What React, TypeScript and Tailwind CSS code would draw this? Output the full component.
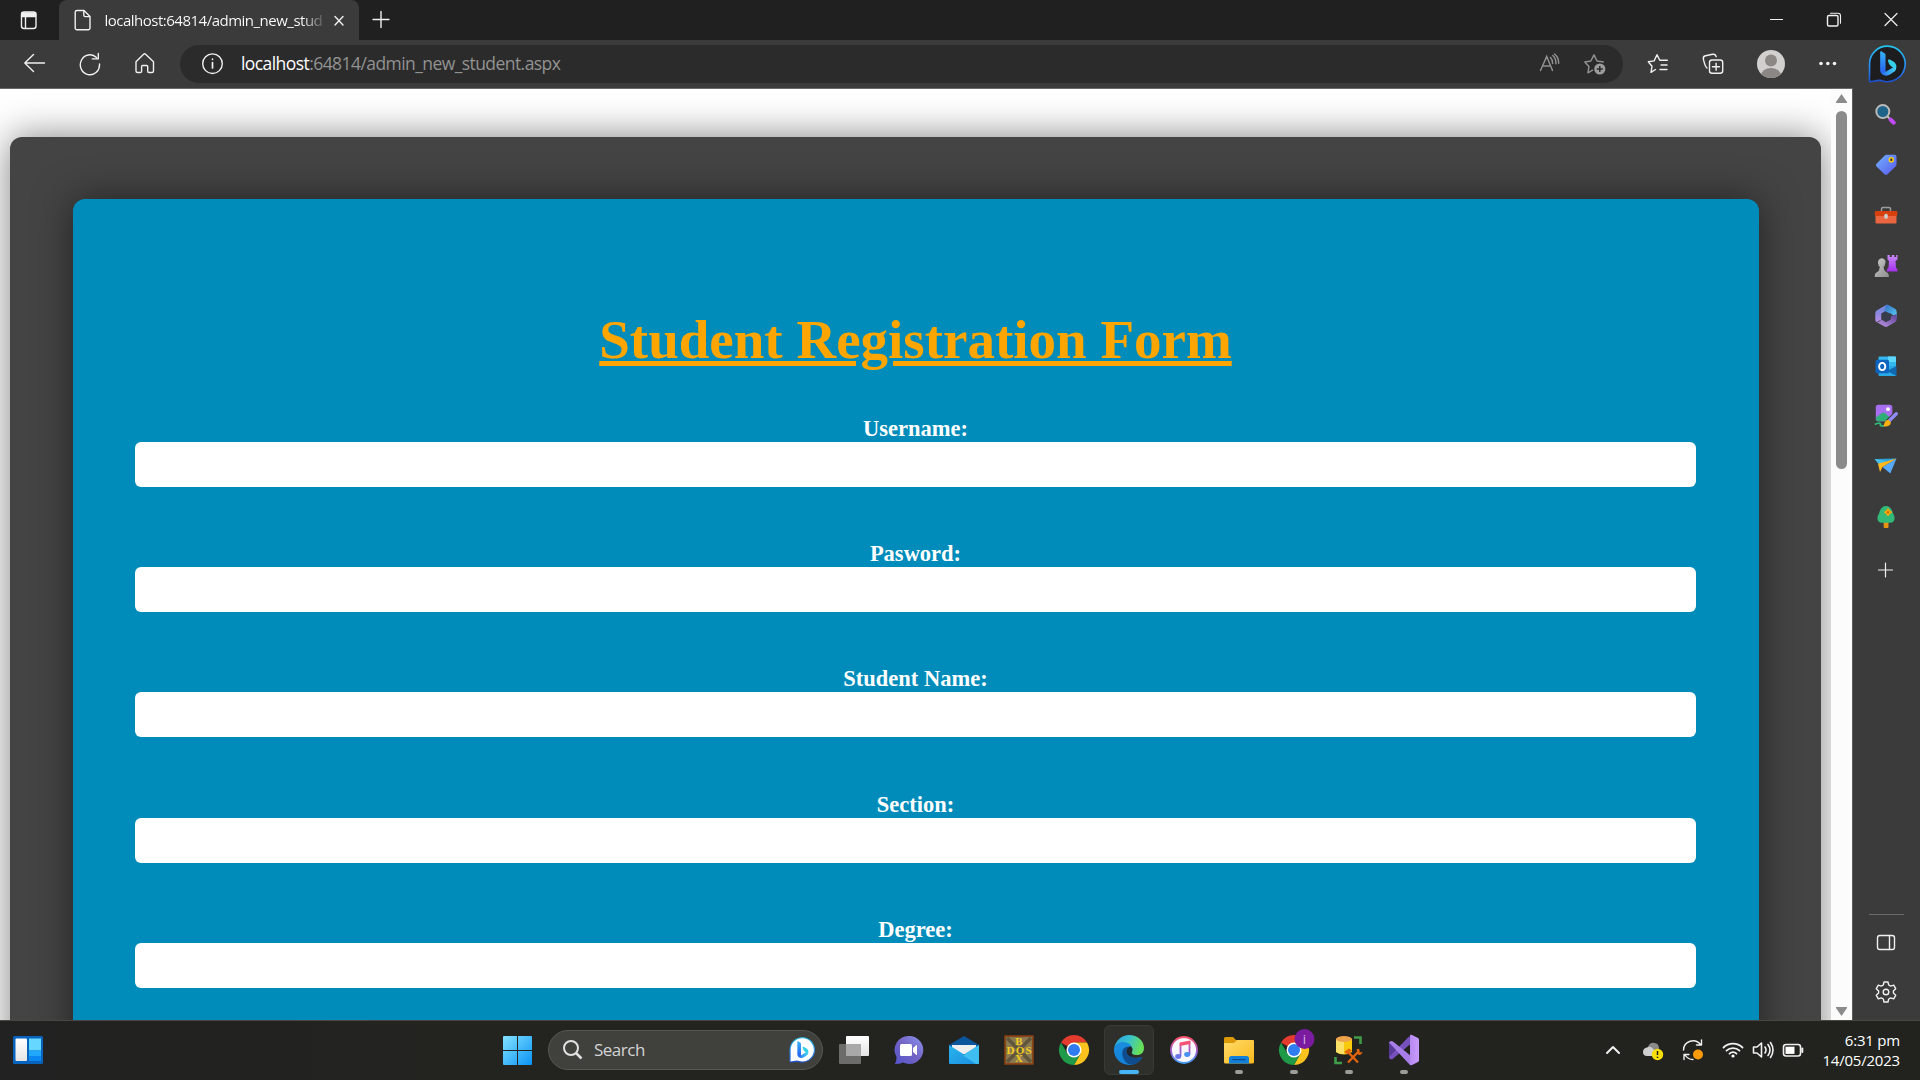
import React from "react";

type P = { children?: React.ReactNode };

const Line = ({ children, w = 24, h = 24 }: P & { w?: number; h?: number }) => (
  <svg width={w} height={h} viewBox={`0 0 ${w} ${h}`} fill="none" stroke="#f0f0f0" strokeWidth="1.4" strokeLinecap="round" strokeLinejoin="round" className="shrink-0">
    {children}
  </svg>
);

const Pic = ({ children, s = 24 }: P & { s?: number }) => (
  <svg width={s} height={s} viewBox={`0 0 ${s} ${s}`} className="shrink-0 overflow-visible">
    {children}
  </svg>
);

const Defs = () => (
  <svg width="0" height="0" className="absolute">
    <defs>
      <linearGradient id="bingRingTop" x1="0" y1="0" x2="0" y2="1">
        <stop offset="0" stopColor="#23c3ee" />
        <stop offset=".6" stopColor="#2a86ef" />
        <stop offset="1" stopColor="#1c51cf" />
      </linearGradient>
      <linearGradient id="bingStem" x1="0" y1="0" x2="0" y2="1">
        <stop offset="0" stopColor="#36b3fa" />
        <stop offset="1" stopColor="#2458ee" />
      </linearGradient>
      <linearGradient id="bingTail" x1="0" y1="0" x2="1" y2="0">
        <stop offset="0" stopColor="#2a63ee" />
        <stop offset="1" stopColor="#3fd8f2" />
      </linearGradient>
      <linearGradient id="win" x1="0" y1="0" x2="1" y2="1">
        <stop offset="0" stopColor="#83e2ff" />
        <stop offset="1" stopColor="#0a93f5" />
      </linearGradient>
      <linearGradient id="tag" x1="0" y1="0" x2="1" y2="1">
        <stop offset="0" stopColor="#71b5fa" />
        <stop offset="1" stopColor="#5a55f2" />
      </linearGradient>
      <linearGradient id="purple" x1="0" y1="0" x2="0" y2="1">
        <stop offset="0" stopColor="#c78bfa" />
        <stop offset="1" stopColor="#a42fe8" />
      </linearGradient>
      <linearGradient id="pawn" x1="0" y1="0" x2="1" y2="1">
        <stop offset="0" stopColor="#c9c9c9" />
        <stop offset="1" stopColor="#8e8e8e" />
      </linearGradient>
      <linearGradient id="officeA" x1="0" y1="0" x2="0" y2="1">
        <stop offset="0" stopColor="#6a86dc" />
        <stop offset="1" stopColor="#b48be4" />
      </linearGradient>
      <linearGradient id="officeB" x1="0" y1="0" x2="1" y2="1">
        <stop offset="0" stopColor="#3468c4" />
        <stop offset="1" stopColor="#55d0f2" />
      </linearGradient>
      <linearGradient id="officeC" x1="0" y1="1" x2="1" y2="0">
        <stop offset="0" stopColor="#c39ae8" />
        <stop offset="1" stopColor="#5a3f94" />
      </linearGradient>
      <linearGradient id="chat" x1="1" y1="0" x2="0" y2="1">
        <stop offset="0" stopColor="#8b95ee" />
        <stop offset=".5" stopColor="#7363c4" />
        <stop offset="1" stopColor="#5455cb" />
      </linearGradient>
      <linearGradient id="mail" x1="0" y1="0" x2="1" y2="1">
        <stop offset="0" stopColor="#28b4ed" />
        <stop offset="1" stopColor="#1c8ee0" />
      </linearGradient>
      <linearGradient id="edgeTop" x1="0" y1="0" x2="1" y2=".3">
        <stop offset="0" stopColor="#2a9fe0" />
        <stop offset=".5" stopColor="#37c1cf" />
        <stop offset="1" stopColor="#67df59" />
      </linearGradient>
      <linearGradient id="edgeLeft" x1="0" y1="0" x2=".3" y2="1">
        <stop offset="0" stopColor="#1c8fe0" />
        <stop offset="1" stopColor="#1280d6" />
      </linearGradient>
      <linearGradient id="folder" x1="0" y1="0" x2="1" y2="1">
        <stop offset="0" stopColor="#ffdb6a" />
        <stop offset="1" stopColor="#fbb91c" />
      </linearGradient>
      <linearGradient id="note" gradientUnits="userSpaceOnUse" x1="0" y1="2" x2="0" y2="28">
        <stop offset="0" stopColor="#f9526b" />
        <stop offset=".55" stopColor="#a05dd0" />
        <stop offset="1" stopColor="#3d9cf2" />
      </linearGradient>
      <linearGradient id="vs" x1="0" y1="0" x2="1" y2="0">
        <stop offset="0" stopColor="#b78af0" />
        <stop offset="1" stopColor="#c99bfb" />
      </linearGradient>
      <linearGradient id="paper" x1="0" y1="0" x2="0" y2="1">
        <stop offset="0" stopColor="#ffffff" />
        <stop offset="1" stopColor="#e5e5e5" />
      </linearGradient>
    </defs>
  </svg>
);

const BingMark = () => (
  <>
    <path d="M12.5 7.6C12.5 6.5 13.6 6.3 14.4 6.8L16.6 8.1C17.6 8.7 18 9.4 18 10.5V27L19 31C15 31 12.5 29 12.5 26Z" fill="url(#bingStem)" />
    <path d="M20.5 16.2C20.2 15 21.2 14.4 22.4 15L26 17C29.3 19 30 22.4 28.3 25.5L23.5 21.6C22 20.6 21 18.4 20.5 16.2Z" fill="#35cfe6" />
    <path d="M13 27C14.5 29 17 28.2 19 27L25.5 23C28.5 21.4 30 24.5 27.5 27L22.5 30.3C18.5 32.8 13.5 31 13 27Z" fill="url(#bingTail)" />
  </>
);

const BingBubble = ({ s, bg }: { s: number; bg: string }) => (
  <svg width={s} height={s} viewBox="0 0 39 39" className="shrink-0">
    <path d="M20 1.2a18.2 18.2 0 1 1-6 35.4C9.500 35.300 6 37.800 2 37.500C1 37.400 1.500 34 1.600 30V19.500A18.300 18.300 0 0 1 20 1.200Z" fill={bg} stroke="url(#bingRingTop)" strokeWidth="1.7" />
    <BingMark />
  </svg>
);

const TitleBar = () => (
  <header className="flex h-10 shrink-0 bg-[#202020]">
    <div className="flex w-[58px] items-center justify-center">
      <Line>
        <rect x="4.500" y="4" width="14.500" height="16.500" rx="2.500" />
        <path d="M5 5h13.500v3.500h-13.500z" fill="#f0f0f0" />
        <path d="M8.500 8v12" />
      </Line>
    </div>
    <div className="ml-px flex w-[300px] items-center rounded-t-lg bg-[#3b3b3b] pl-[12px]">
      <Line>
        <path d="M6 2.500h7l6 6V20a1.800 1.800 0 0 1-1.800 1.800H6A1.800 1.800 0 0 1 4.200 20V4.200A1.800 1.800 0 0 1 6 2.500Z" />
        <path d="M12.800 2.800v4.500a1.300 1.300 0 0 0 1.300 1.300h4.500" />
      </Line>
      <div className="ml-[9.500px] ml-[9.5px] w-[219.5px] whitespace-nowrap bg-gradient-to-r from-white from-90% to-[#555] bg-clip-text font-['Open_Sans',sans-serif] text-[15px] leading-5 tracking-[-0.5px] text-transparent">
        localhost:64814/admin_new_stud
      </div>
      <div className="ml-[3px] flex w-6 justify-center">
        <Line><path d="M8 8.500l8 8.500M16 8.500l-8 8.500" /></Line>
      </div>
    </div>
    <div className="ml-[9.5px] flex w-6 items-center justify-center">
      <Line><path d="M12 3.500v16M4 11.500h16" /></Line>
    </div>
    <div className="ml-auto flex">
      <div className="flex w-[57px] items-center justify-center"><Line><path d="M5.500 11.500h12" strokeLinecap="square" strokeWidth="1" /></Line></div>
      <div className="flex w-[57px] items-center justify-center">
        <Line><rect x="5.500" y="7.500" width="10.500" height="10.500" rx="1.500" /><path d="M8.500 5.300h7.500a2.500 2.500 0 0 1 2.500 2.500v7.500" strokeWidth="1.100" /></Line>
      </div>
      <div className="flex w-[58px] items-center justify-center"><Line><path d="M6 5.500l12 12M18 5.500L6 17.500" strokeWidth="1.200" /></Line></div>
    </div>
  </header>
);

const ToolBar = () => (
  <div className="flex h-12 shrink-0 items-center bg-[#3b3b3b] pl-[7.5px]">
    <div className="flex w-[55px] justify-center"><Line><path d="M21.500 11h-19.500M10.500 2.500l-8.700 8.500 8.700 8.500" /></Line></div>
    <div className="flex w-[55px] justify-center"><Line><path d="M18.500 5.500A9.600 10 0 1 0 21.500 12M20.300 1.500v5.400h-6" /></Line></div>
    <div className="flex w-[55px] justify-center">
      <Line><path d="M3 9.800L10.600 2.200a1.400 1.400 0 0 1 2 0L20.500 9.800V19a1.500 1.500 0 0 1-1.500 1.500H16A1.300 1.300 0 0 1 14.700 19.200V14.500a1 1 0 0 0-1-1H9.600a1 1 0 0 0-1 1v4.700A1.300 1.300 0 0 1 7.300 20.500h-2.800A1.500 1.500 0 0 1 3 19Z" /></Line>
    </div>
    <div className="ml-[7.5px] flex h-[38px] w-[1443px] items-center rounded-full bg-[#2b2b2b] pl-5">
      <Line><circle cx="12.500" cy="11.700" r="9.800" /><path d="M12.500 10.500v5.500M12.500 7.100v.2" strokeWidth="1.700" /></Line>
      <span className="ml-[17px] whitespace-nowrap pb-0.5 font-['Open_Sans',sans-serif] text-[17.5px] leading-6 tracking-[-0.57px] text-[#929292]">
        <span className="text-white">localhost</span>:64814/admin_new_student.aspx
      </span>
      <div className="ml-auto flex items-center gap-[22px] pr-[16px]">
        <svg width="24" height="24" viewBox="0 0 24 24" fill="none" stroke="#8f8f8f" strokeWidth="1.500" strokeLinecap="round">
          <path d="M3.500 18.500L9.700 4.500L15.500 18.500M5.500 14h8.200M13.500 5.500q2.300 2.300 2.200 6M15.800 3.500q3.400 3.200 3.200 8.200" />
          <path d="M17.500 2q4.300 3.500 4.200 9.200" />
        </svg>
        <svg width="24" height="24" viewBox="0 0 24 24" fill="none" stroke="#8f8f8f" strokeWidth="1.500" strokeLinejoin="round">
          <path d="M10 17.800l-5 3 .9-6.300L1.800 10l6-1L11 2.800L14 9l6.800 1" />
          <circle cx="16.800" cy="17" r="5.600" fill="#9c9c9c" stroke="none" />
          <path d="M16.800 14v6M13.800 17h6" stroke="#2b2b2b" />
        </svg>
      </div>
    </div>
    <div className="ml-[7.5px] flex w-[55px] justify-center">
      <Line><path d="M9.500 17.500L5 20.300l1-6L2.300 9.800l5.800-.9L11 2.700L13.800 8.300M13.800 8.300h7.500M15 13h6M14 17.500h7" /></Line>
    </div>
    <div className="flex w-[55px] justify-center">
      <Line><rect x="8.500" y="8" width="13.200" height="13.200" rx="2.500" /><path d="M15.100 11.200v7M11.500 14.700h7M6 16C4 14.500 3.500 11.500 2.400 7.200C1.900 5.200 2.500 4.200 4.500 3.700L11.500 2.300C13.500 1.900 14.700 2.700 15.200 4.700" /></Line>
    </div>
    <div className="flex w-[60px] justify-center">
      <Pic s={28}>
        <clipPath id="face"><circle cx="14" cy="14" r="14" /></clipPath>
        <circle cx="14" cy="14" r="14" fill="#d2d0ce" />
        <circle cx="14" cy="10.500" r="6" fill="#8a8784" />
        <ellipse cx="14" cy="25.500" rx="10" ry="7.500" fill="#8a8784" clipPath="url(#face)" />
      </Pic>
    </div>
    <div className="flex w-[54px] justify-center">
      <Pic><circle cx="5" cy="11.500" r="1.800" fill="#f0f0f0" /><circle cx="11.800" cy="11.500" r="1.800" fill="#f0f0f0" /><circle cx="18.500" cy="11.500" r="1.800" fill="#f0f0f0" /></Pic>
    </div>
    <div className="flex w-[65.5px] justify-center"><BingBubble s={38} bg="#1d1d1f" /></div>
  </div>
);

const sideIcons: React.ReactNode[] = [
  <Pic key="search">
    <path d="M13.500 13.500l3.500 3.500" stroke="#bdbdbd" strokeWidth="2" />
    <path d="M16.500 16.500l3.300 3.200" stroke="#c24af5" strokeWidth="4" strokeLinecap="round" />
    <circle cx="8.800" cy="8.500" r="6.500" fill="#1f6388" stroke="#b9b9b9" strokeWidth="2" />
  </Pic>,
  <Pic key="tag">
    <path d="M12.500 1.800H20.500Q22.500 1.800 22.500 3.800V11.500Q22.500 12.500 21.500 13.600L13.500 21.300Q12 22.500 10.500 21.300L2.500 13.500Q1.300 12.200 2.500 10.800L10.500 2.800Q11.500 1.800 12.500 1.800Z" fill="url(#tag)" />
    <circle cx="17.300" cy="6.800" r="2" fill="#333" stroke="#f5c918" strokeWidth="1.600" />
  </Pic>,
  <Pic key="tools">
    <path d="M7.500 8V6Q7.500 4.500 9 4.500h6Q16.500 4.500 16.500 6v2" stroke="#9d9d9d" strokeWidth="1.500" fill="none" />
    <rect x="1.500" y="12" width="21" height="8.500" rx="1.300" fill="#e96640" />
    <rect x=".8" y="8" width="22.500" height="5" rx="1" fill="#d6400f" />
    <rect x="10.300" y="10.800" width="3.500" height="5" rx="1.600" fill="#c9cfcf" />
  </Pic>,
  <Pic key="games">
    <path d="M13.500 1h2.300v2h2V1h2.400v2h2V1H23.500v4.500l-2 1.500.5 6.500 1.500 2.300v1.700H12.800v-1.700l1.700-2.300.5-6.500-1.500-1.500Z" fill="url(#purple)" />
    <path d="M4 8a3.800 3.800 0 1 1 6.800 2.500v1.500L9.500 12.500q.3 4 2 5 2.800 1 3.300 3.500v2H.8v-2Q1 18.500 4 17.500q1.500-1.300 1.800-5L4.500 12V10.500Q3.600 9.500 4 8Z" fill="url(#pawn)" />
  </Pic>,
  <Pic key="m365">
    <path d="M12.500 .8L3 6.200Q1.300 7.200 1.300 9V16Q1.300 17.300 2.500 18L7.500 15.500V9.500L14.500 5.500V2Q14 .5 12.500 .8Z" fill="url(#officeA)" />
    <path d="M12.500 .8Q13.500 .4 14.500 1L21 4.800Q22.700 5.800 22.700 8V13.500L16.500 9.500 9.500 8.500 11 5Q11.500 2 12.500 .8Z" fill="url(#officeB)" />
    <path d="M22.700 10V15.500Q22.700 17.300 21 18.300L13.500 22.600Q12 23.300 10.500 22.600L2.500 18Q5 18.500 7.500 15.500L12 18L16.500 15.500V12.500Z" fill="url(#officeC)" />
    <path d="M7.500 9.500L11.500 7.300L16.800 10v5.300L12 18l-4.500-2.700Z" fill="#373d4a" />
  </Pic>,
  <Pic key="outlook">
    <path d="M5.500 2.500H21q1 0 1 1V12H4.500V3.500q0-1 1-1Z" fill="#35b8ef" />
    <path d="M14 2.500h7q1 0 1 1V8h-8Z" fill="#5ed8fa" />
    <path d="M4.500 12H22v9q0 1-1 1H5.500q-1 0-1-1Z" fill="#28a9e8" />
    <path d="M22.500 12v10L13 17Z" fill="#1268ae" />
    <rect x="1.500" y="5.800" width="13.500" height="13.500" rx="1.500" fill="#0f64c0" />
    <ellipse cx="8.200" cy="12.500" rx="3.100" ry="3.600" stroke="#fff" strokeWidth="1.900" fill="none" />
  </Pic>,
  <Pic key="designer">
    <rect x="1.800" y=".8" width="16.500" height="16.500" rx="2.500" fill="#a86ef0" />
    <path d="M2 13.500L8 9q1.500-1 3 0l7 6.500q-.5 1.800-2.500 1.800H4Q1.800 17 2 13.500Z" fill="#2fae78" />
    <circle cx="14" cy="5.200" r="1.900" fill="#fff" />
    <path d="M.8 20.500q4-2.500 6-.5-2 3 4 1.500" stroke="#2dbb78" strokeWidth="1.600" fill="none" />
    <path d="M14.500 17.500L22 10" stroke="#3b3b3b" strokeWidth="5.500" strokeLinecap="round" />
    <path d="M15.500 16.500L22.300 9.800" stroke="#8f8cf5" strokeWidth="3.400" strokeLinecap="round" />
    <path d="M9.500 22.300q1-6.300 4.800-6.500l2.700 2.700q-1 4.500-7.500 3.800Z" fill="#fbb012" />
  </Pic>,
  <Pic key="drop">
    <path d="M.5 5L22.500 4.500L8 11Z" fill="#2aa5e0" />
    <path d="M22.500 4.500L8.500 13l7.800 6.500Z" fill="#58a9f7" />
    <path d="M.5 5L5 10.500 12 7Z" fill="#49bfe8" />
    <path d="M4 9.800L22.500 4.500 8.500 13 6 18Z" fill="#ffb81e" />
  </Pic>,
  <Pic key="tree">
    <rect x="9.700" y="15" width="4.800" height="8" rx="1" fill="#e8940e" />
    <path d="M12 1C16.500 1 18 5 19 8.500C22 13 20.500 17.800 16 17.800H8C3.500 17.800 2 13 5 8.500C6 5 7.500 1 12 1Z" fill="#32b978" />
    <path d="M14 3.500l1.500 2.200 2.300 1.500-2.300 1.500L14 11l-1.500-2.300-2.300-1.500 2.300-1.500Z" fill="#fba50c" stroke="#fba50c" strokeWidth="1" />
    <circle cx="14" cy="7.200" r="1" fill="#b55b08" />
  </Pic>,
];

const Sidebar = () => (
  <aside className="flex w-[68px] shrink-0 flex-col items-center border-l border-[#5c5c5c] bg-[#3b3b3b] pr-px pt-[2px]">
    {sideIcons.map((icon, i) => (
      <div key={i} className="flex h-[50.2px] w-full shrink-0 items-center justify-center">{icon}</div>
    ))}
    <div className="flex h-[56px] items-center"><Line><path d="M11.500 5v14M4.500 12h14" strokeWidth="1.200" /></Line></div>
    <div className="mt-auto h-px w-[35px] bg-[#6b6b6b]" />
    <div className="mt-0.5 flex h-[50px] items-center">
      <Line><rect x="3.500" y="5.500" width="17" height="14" rx="2.300" /><path d="M15.500 5.500v14" /></Line>
    </div>
    <div className="mb-[3px] flex h-[50px] items-center">
      <Line>
        <circle cx="12" cy="12" r="2.800" />
        <path d="M10 2h4l.7 3 2 1.100 3-.9 2 3.500-2.300 2.200v2.200l2.300 2.200-2 3.500-3-.9-2 1.100L14 22h-4l-.7-3-2-1.100-3 .9-2-3.500 2.300-2.200v-2.200L2.300 8.700l2-3.500 3 .9 2-1.100Z" />
      </Line>
    </div>
  </aside>
);

const fields = ["Username:", "Pasword:", "Student Name:", "Section:", "Degree:"];

const WebPage = () => (
  <main className="h-[931px] w-[1831px] shrink-0 overflow-hidden bg-white pl-2.5 pt-[48px]">
    <div className="h-[1200px] w-[1811px] rounded-xl bg-[#444444] pl-[63px] pt-[62px] shadow-[0_0_38px_rgba(0,0,0,0.5)]">
      <form className="h-[1200px] w-[1686px] rounded-xl bg-[#008cba] pl-[62px] pr-[63px] pt-[109px] font-['Liberation_Serif',serif] font-bold shadow-[0_0_38px_rgba(0,0,0,0.5)]">
        <h1 className="h-[106px] text-center text-[55px] leading-[63px] text-[#ffa500] underline">Student Registration Form</h1>
        {fields.map((label) => (
          <div key={label} className="h-[125.2px]">
            <label className="block h-[28px] text-center text-[22.5px] leading-[30px] text-white">{label}</label>
            <input className="block h-[45px] w-full rounded-md bg-white outline-none" />
          </div>
        ))}
      </form>
    </div>
  </main>
);

const ScrollBar = () => (
  <div className="flex w-[21px] shrink-0 flex-col items-center bg-[#fcfcfc] pt-[5px]">
    <svg width="11" height="9" viewBox="0 0 11 9"><path d="M5.500 0L11 8V9H0V8Z" fill="#8b8b8b" /></svg>
    <div className="mt-2 h-[358px] w-[11px] rounded-full bg-[#8b8b8b]" />
    <svg width="11" height="9" viewBox="0 0 11 9" className="mb-1 mt-auto"><path d="M5.500 9L11 1V0H0V1Z" fill="#8b8b8b" /></svg>
  </div>
);

const ChromeLogo = () => (
  <>
    <path d="M15 15L2 7.500A15 15 0 0 1 28 7.500H15Z" fill="#e33b2e" />
    <path d="M15 7.500H28A15 15 0 0 1 15 30L21.500 18.700Z" fill="#fcc31e" />
    <path d="M2 7.500A15 15 0 0 0 15 30L21.500 18.700 8.500 18.700Z" fill="#1f9a48" />
    <circle cx="15" cy="15" r="7.500" fill="#fff" />
    <circle cx="15" cy="15" r="6" fill="#2f7cf0" />
  </>
);

type Task = { name: string; icon: React.ReactNode; state?: "open" | "active" };

const tasks: Task[] = [
  { name: "taskview", icon: <><rect x="7" y="1" width="23" height="20" rx="1" fill="url(#paper)" /><rect x="0" y="9" width="22" height="20" rx="1" fill="#6c6c6b" /><rect x="7" y="9" width="15" height="12" fill="#a9a9a9" /></> },
  { name: "chat", icon: <><path d="M15 1A14 14 0 1 1 9 27.500Q6 29 .8 29Q2.800 26 2.500 22A14 14 0 0 1 15 1Z" fill="url(#chat)" /><rect x="6" y="9" width="12" height="12" rx="1.500" fill="#fff" /><path d="M19 13l3.500-3h.5v10h-.5L19 17Z" fill="#fff" /></> },
  { name: "mail", icon: <><path d="M0 10L15 1l15 9v7H0Z" fill="#0a559c" /><path d="M3 10h24v9H3Z" fill="#eee" /><path d="M0 10l15 9.500L30 10v18q0 1-1 1H1q-1 0-1-1Z" fill="url(#mail)" /><path d="M30 10L14 20.500 27 29h2q1 0 1-1Z" fill="#46c7f3" fillOpacity=".8" /></> },
  { name: "dosbox", icon: <><rect x="1.200" y="1.200" width="27.600" height="27.600" fill="#8a7a51" stroke="#8d4515" strokeWidth="1.800" /><path d="M3 3l24 24M27 3L3 27" stroke="#60563d" strokeWidth="3.500" /><g fill="#f2cb20" fontFamily="Liberation Serif, serif" fontWeight="bold" fontSize="11" textAnchor="middle"><text x="15" y="10">B</text><text x="15" y="18.500" textLength="25">DOS</text><text x="15" y="27">X</text></g></> },
  { name: "chrome", icon: <ChromeLogo /> },
  {
    name: "edge",
    state: "active",
    icon: (
      <>
        <path d="M0 15C0 9 5 5.500 11 6.500C16 7.500 19 10 19 13L13 14C11 18 14 22 20 23L28 22.500C25 28 20 30 15 30A15 15 0 0 1 0 15Z" fill="url(#edgeLeft)" />
        <path d="M16 11.500C10 11 7.500 15.500 8.500 20.500C9.500 26 14 30 18 29.700C23 29 26.500 26 28 23Q28 22 26.500 22.500C20 24.500 12 21 12.800 15Q13.200 12.500 16 11.500Z" fill="#104d8e" />
        <path d="M17.500 11.500C14.500 11.500 12.500 13.500 12.700 16.500C13 19 14.800 21 17.500 22L19 18Z" fill="#21262a" />
        <path d="M.3 12.500C2 5 8 0 15 0C24 0 30 6 30 13C30 17.500 27 20 23 20C19 20 17 18.500 18 17C19.600 14 18 10 13.500 8C8 5.700 2.500 8 .3 12.500Z" fill="url(#edgeTop)" />
      </>
    ),
  },
  { name: "music", icon: <><circle cx="15" cy="15" r="13" fill="#f8f7fb" stroke="url(#note)" strokeWidth="1.800" /><path d="M11.500 21V9L20.500 7v12.500" stroke="url(#note)" strokeWidth="1.800" fill="none" /><path d="M10.800 7.500l10.500-2V9l-10.500 2Z" fill="#f65373" /><ellipse cx="9.200" cy="21.500" rx="3" ry="2.400" fill="#6a73e8" /><ellipse cx="18.200" cy="19.500" rx="3" ry="2.400" fill="#478ff0" /></> },
  { name: "files", state: "open", icon: <><path d="M0 3.500Q0 2 1.500 2H9l3 3h14v8H0Z" fill="#dc9a08" /><path d="M0 8h10l3-3h16q1 0 1 1v21q0 1.500-1.500 1.500h-27Q0 28.500 0 27Z" fill="url(#folder)" /><path d="M5 28.500v-5Q5 21 7.500 21h15Q25 21 25 23.500v5Z" fill="#1280d8" /><rect x="8.500" y="24" width="13" height="1.200" fill="#0a4c8c" /></> },
  { name: "chrome-profile", state: "open", icon: <><ChromeLogo /><circle cx="25.500" cy="4" r="10" fill="#7a1ba0" /><text x="25.500" y="8.500" textAnchor="middle" fontFamily="Open Sans, sans-serif" fontSize="13" fill="#d8b2e6">i</text></> },
  {
    name: "sql",
    state: "open",
    icon: (
      <>
        <path d="M2 4v13q8 5 16 0V4Z" fill="#f9c90c" /><path d="M2 4v13q3 2.500 8 2V4Z" fill="#fbe067" />
        <ellipse cx="10" cy="4" rx="8" ry="3" fill="#eda24c" />
        <path d="M20 2.500h6.500V9M1.500 22v6H8" stroke="#3f9c48" strokeWidth="2.600" fill="none" />
        <path d="M13 16l11 11.500M14 27.500L25 16" stroke="#e2650d" strokeWidth="2.300" />
        <path d="M10 17l5-3.500 3 2-4 4Z" fill="#e2650d" /><path d="M22.500 15q1-2 3-.5v3l3-.5q-1 3.500-4 3Z" fill="#e2650d" />
      </>
    ),
  },
  {
    name: "vs",
    state: "open",
    icon: (
      <>
        <path d="M0 8q.3-1.500 2-2L9 12v6l-7 6q-1.700-.5-2-2Z" fill="#563a94" />
        <path d="M0 22L20.500 1 22 8.500 3 24.500Q1 25 0 22Z" fill="#7650bd" />
        <path d="M0 7.500Q1.500 5 4 6.500L22 21l-1 9Z" fill="#a77de8" />
        <path d="M21 0q1-.3 2 0l6 3q1 .6 1 1.700v20.600q0 1.100-1 1.700l-6 3q-1 .3-2 0Z" fill="url(#vs)" />
      </>
    ),
  },
];

const TaskBar = () => (
  <footer className="flex h-[60px] shrink-0 items-center border-t border-[#484843] bg-gradient-to-r from-[#222222] from-0% via-[#23231f] via-30% to-[#22231f] pb-px">
    <div className="flex w-[502px] items-center pl-[13px]">
      <Pic s={30}>
        <rect x="0" y="1" width="30" height="28" rx="1.500" fill="#0863bc" />
        <rect x="2.500" y="3.500" width="11.500" height="22.500" rx="1" fill="url(#paper)" />
        <rect x="16" y="3.500" width="12" height="12" fill="#66d7ff" /><rect x="16" y="15.500" width="12" height="5.500" fill="#22a8fb" /><rect x="16" y="21" width="12" height="5" fill="#0a87f0" />
      </Pic>
    </div>
    <Pic s={30}><path d="M1 2q0-1 1-1h13v14H1ZM16 1h13q1 0 1 1v13H16ZM1 16h14v14H2q-1 0-1-1ZM16 16h14v13q0 1-1 1H16Z" fill="url(#win)" /></Pic>
    <div className="ml-4 flex h-10 w-[275px] items-center rounded-full border border-[#575754] bg-[#40403d] pl-[13px] pr-[7px]">
      <svg width="22" height="22" viewBox="0 0 22 22" fill="none" stroke="#e2e2e2" strokeWidth="2"><circle cx="9" cy="9" r="7" /><path d="M14 14l5.500 5.500" strokeWidth="2.500" /></svg>
      <span className="ml-[10px] font-['Open_Sans',sans-serif] text-[17px] leading-6 tracking-[-0.5px] text-[#d4d4d4]">Search</span>
      <div className="ml-auto"><BingBubble s={26} bg="#ffffff" /></div>
    </div>
    <div className="ml-[3.5px] flex">
      {tasks.map((task) => (
        <div key={task.name} className="flex w-[55px] justify-center">
          <div className={task.state === "active" ? "relative flex h-[50px] w-[50px] items-center justify-center rounded-md border border-[#393935] bg-[#2f2f2c]" : "relative flex h-[50px] w-[50px] items-center justify-center"}>
            <Pic s={30}>{task.icon}</Pic>
            {task.state === "open" && <span className="absolute bottom-[1px] left-[21px] h-1 w-2 rounded-full bg-[#9c9c99]" />}
            {task.state === "active" && <span className="absolute bottom-0 left-[14px] h-1 w-5 rounded-full bg-[#45b5f8]" />}
          </div>
        </div>
      ))}
    </div>
    <div className="ml-auto flex items-center pr-5">
      <div className="flex w-10 justify-center"><Line><path d="M6 15l6-6 6 6" strokeWidth="2" /></Line></div>
      <div className="flex w-10 justify-center">
        <Pic>
          <path d="M7 9Q9 4 13.500 5Q18 5 18 11v5H5Z" fill="#8a8a8a" />
          <path d="M2 14q0-4 4-4.500Q10 7 13 12v6H6q-4 0-4-4Z" fill="#cfcfcf" />
          <circle cx="16.500" cy="16.500" r="5.700" fill="#f9df08" /><path d="M16.500 13v4M16.500 18.700v1.300" stroke="#222" strokeWidth="1.500" />
        </Pic>
      </div>
      <div className="flex w-10 justify-center">
        <Line><path d="M2.500 12A9.500 9.500 0 0 1 19.500 6.500M20.500 2v5h-5M12 21.500A9.500 9.500 0 0 1 4 17M3 21.500v-5h5" /><circle cx="17" cy="16.500" r="5" fill="#fb9b0b" stroke="none" /></Line>
      </div>
      <div className="flex w-10 justify-center">
        <Line><path d="M2.500 9.500a13.500 13.500 0 0 1 19 0M5.500 12.700a9.300 9.300 0 0 1 13 0M8.500 15.700a5 5 0 0 1 7 0" strokeWidth="1.800" /><circle cx="12" cy="18" r="1.600" fill="#fff" stroke="none" /></Line>
      </div>
      <div className="-ml-[5px] flex w-[30px] justify-center">
        <Line><path d="M2.500 9h3.500l4.500-4v14L6 15H2.500ZM14 9q2 3 0 6M17 6.500q4 5.500 0 11M19.500 4.500q5 7.500 0 15" strokeWidth="1.600" /></Line>
      </div>
      <div className="flex w-[30px] justify-center">
        <Line><rect x="2.500" y="6.500" width="17" height="11.500" rx="2.500" strokeWidth="1.600" /><rect x="4.500" y="8.700" width="9" height="7.200" fill="#fff" stroke="none" /><path d="M21.300 10.500v3.500" strokeWidth="2" /></Line>
      </div>
      <div className="w-[92px] whitespace-nowrap pb-px text-right font-['Open_Sans',sans-serif] text-[15px] leading-5 tracking-[-0.2px] text-white">
        <div>6:31 pm</div>
        <div>14/05/2023</div>
      </div>
    </div>
  </footer>
);

export default function App() {
  return (
    <div className="flex h-[1080px] w-[1920px] flex-col overflow-hidden bg-[#202020]">
      <Defs />
      <TitleBar />
      <ToolBar />
      <div className="flex h-[932px] shrink-0">
        <div className="flex w-[1852px] border-t border-[#6a6a6a]">
          <WebPage />
          <ScrollBar />
        </div>
        <Sidebar />
      </div>
      <TaskBar />
    </div>
  );
}
